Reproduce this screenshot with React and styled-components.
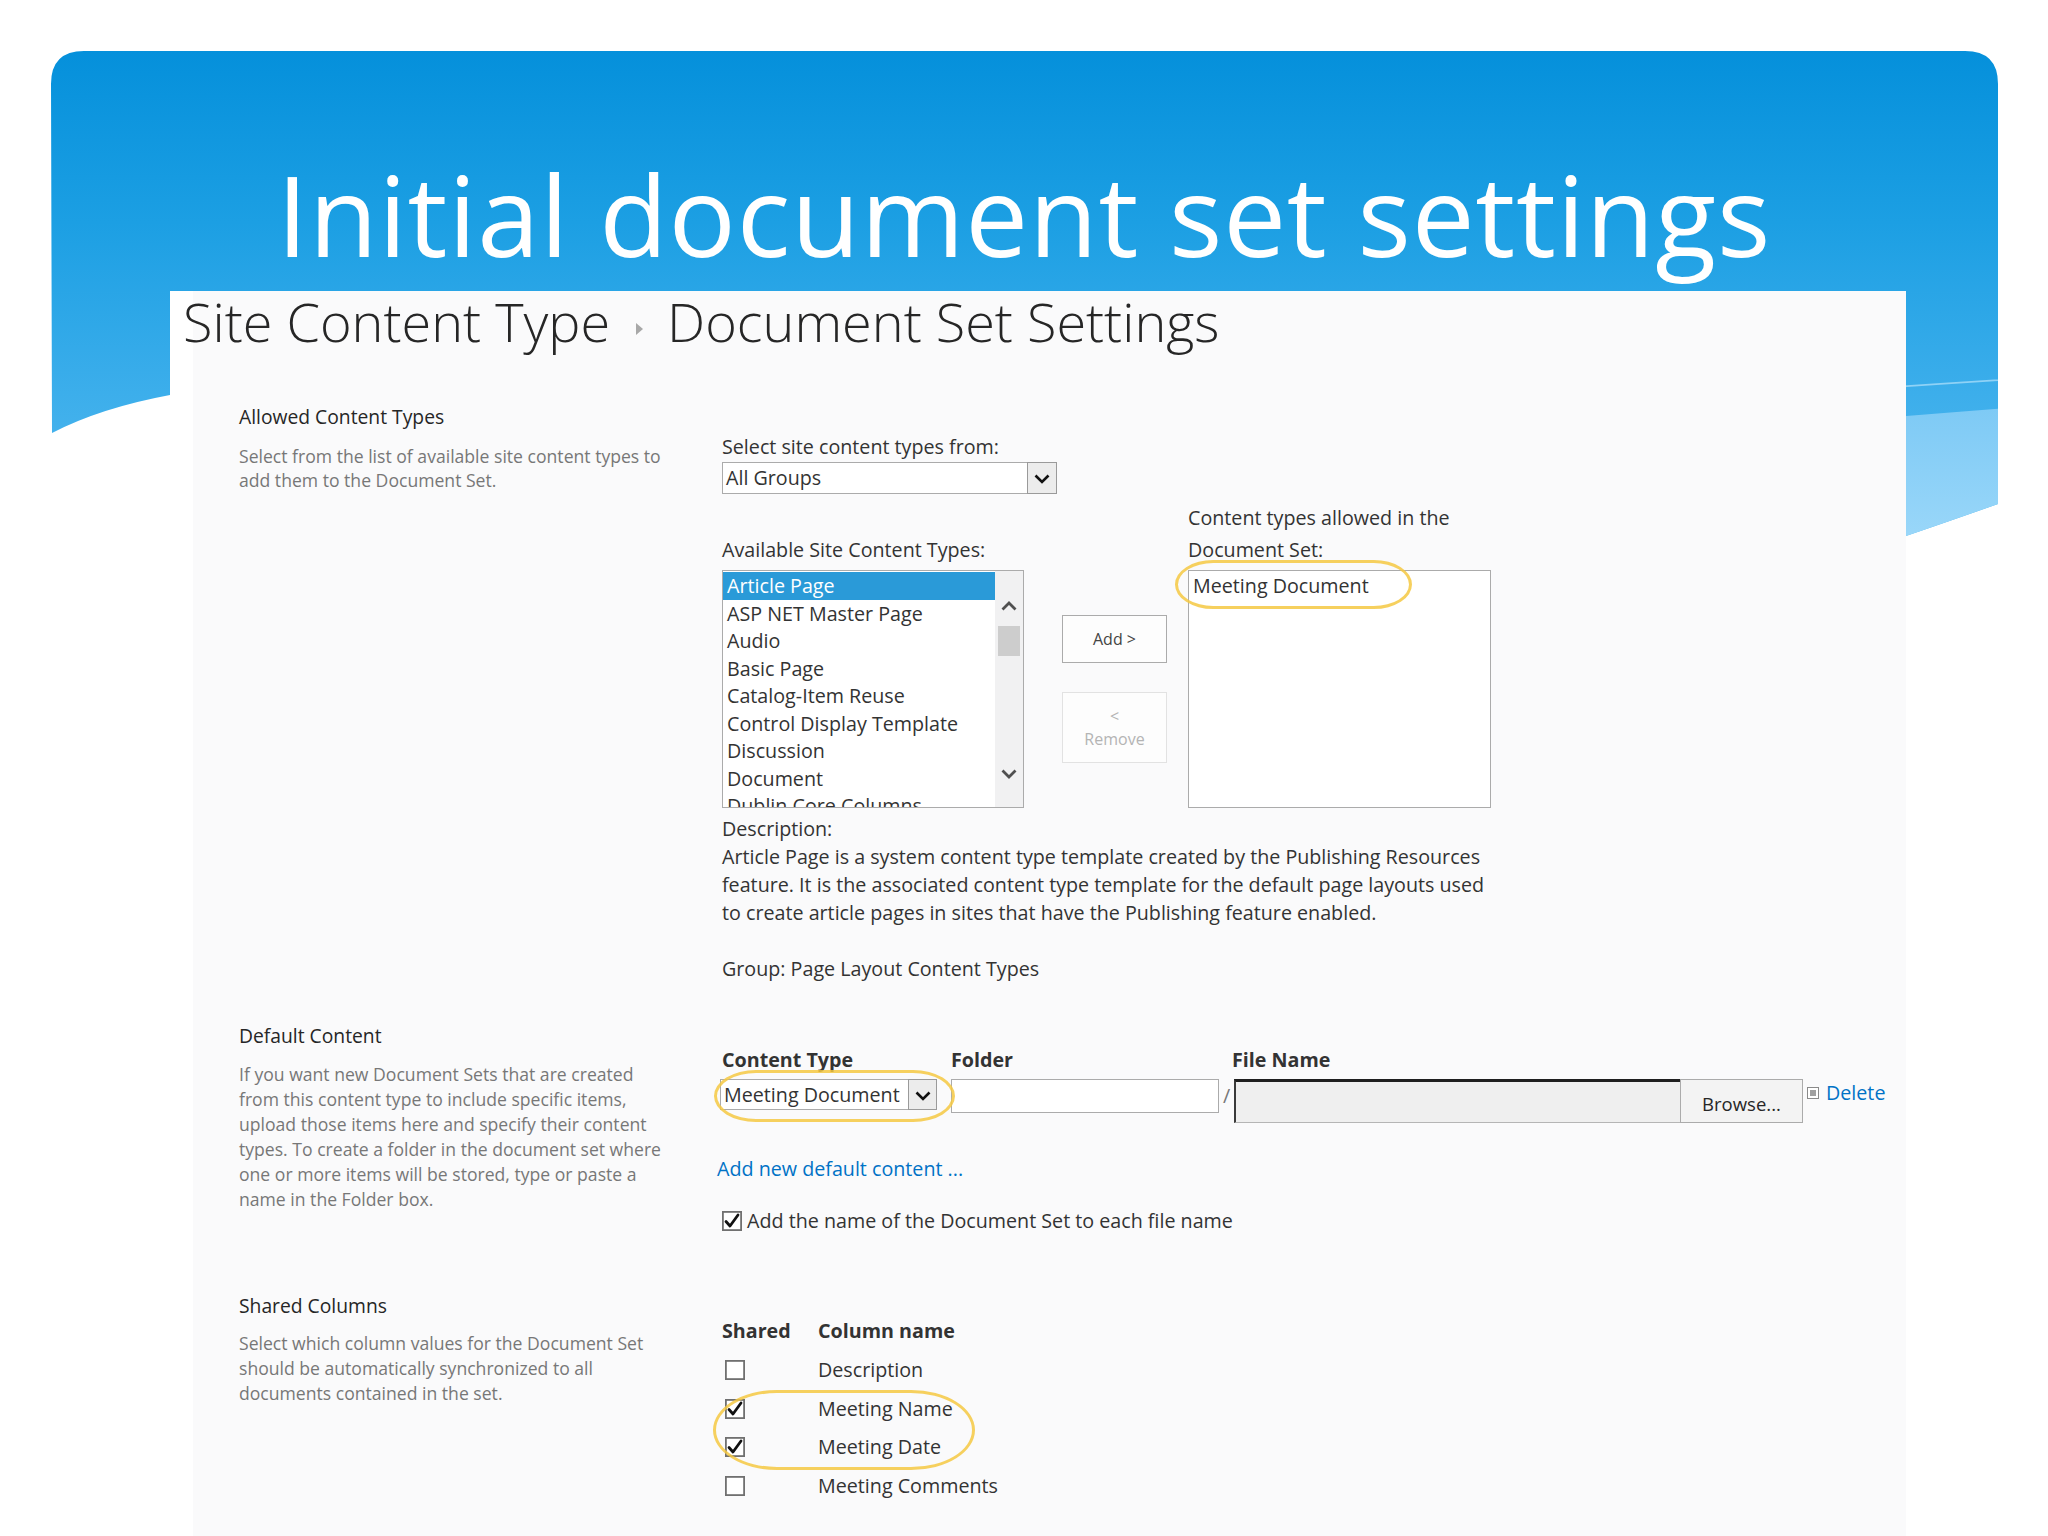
import React from 'react';
import styled, { createGlobalStyle } from 'styled-components';

const Global = createGlobalStyle`
  html, body { margin: 0; padding: 0; background: #ffffff; }
  body { font-family: "Open Sans", "Noto Sans", sans-serif; }
  * { box-sizing: border-box; }
`;

const FONT = `"Open Sans", "Noto Sans", sans-serif`;
const FS = 19.7;

const Slide = styled.div`
  position: relative;
  width: 2048px;
  height: 1536px;
  overflow: hidden;
  background: #ffffff;
`;

const Backdrop = styled.svg`
  position: absolute;
  left: 0;
  top: 0;
  width: 2048px;
  height: 1536px;
  z-index: 0;
`;

const Content = styled.div`
  position: relative;
  z-index: 1;
  padding-top: 138px;
`;

const Title = styled.h1`
  margin: 0;
  height: 152px;
  font: 400 112px/152px ${FONT};
  letter-spacing: 0.8px;
  color: #ffffff;
  text-align: center;
  white-space: nowrap;
`;

const Panel = styled.div`
  width: 1736px;
  height: 1246px;
  margin-left: 170px;
  background: linear-gradient(to right, #ffffff 0 23px, #fafafb 23px);
  color: #333333;
  font-family: ${FONT};
`;

const Breadcrumb = styled.div`
  display: flex;
  align-items: center;
  height: 60px;
  margin-top: 1px;
  padding-left: 13px;
  font: 300 54px/60px ${FONT};
  color: #262626;
  white-space: nowrap;
`;

const CrumbArrow = styled.span`
  width: 0;
  height: 0;
  margin: 16px 24px 0 26px;
  border-top: 6px solid transparent;
  border-bottom: 6px solid transparent;
  border-left: 7px solid #a8a8a8;
`;

const Section = styled.section`
  display: grid;
  grid-template-columns: 483px 1fr;
  align-items: start;
  padding-left: 69px;
  margin-top: ${(p) => p.$top}px;
`;

const Info = styled.div`
  display: flex;
  flex-direction: column;
`;

const InfoTitle = styled.div`
  font: 400 19.3px/26px ${FONT};
  color: #262626;
  white-space: nowrap;
`;

const InfoText = styled.p`
  margin: ${(p) => p.$gap}px 0 0;
  font: 400 17.6px/${(p) => p.$lh}px ${FONT};
  color: #777777;
  white-space: nowrap;
`;

const Body = styled.div`
  display: flex;
  flex-direction: column;
  align-items: flex-start;
  padding-top: ${(p) => p.$pad}px;
  font: 400 ${FS}px/26px ${FONT};
  color: #333333;
`;

const Label = styled.div`
  font: 400 ${FS}px/${(p) => p.$lh || 26}px ${FONT};
  color: #333333;
  margin-top: ${(p) => p.$mt || 0}px;
  white-space: nowrap;
`;

const SelectBox = styled.div`
  position: relative;
  display: flex;
  align-items: stretch;
  width: ${(p) => p.$w}px;
  height: ${(p) => p.$h}px;
  margin-top: ${(p) => p.$mt || 0}px;
  margin-left: ${(p) => p.$ml || 0}px;
  border: 1px solid #ababab;
  background: #ffffff;
`;

const SelectValue = styled.div`
  flex: 1;
  padding-left: 3px;
  font: 400 ${FS}px/${(p) => p.$h - 2}px ${FONT};
  color: #333333;
  white-space: nowrap;
  overflow: hidden;
`;

const SelectButton = styled.div`
  width: ${(p) => p.$w}px;
  display: flex;
  align-items: center;
  justify-content: center;
  border: 1px solid #9a9a9a;
  margin: -1px -1px -1px 0;
  background: #ececec;
`;

const TransferGrid = styled.div`
  display: grid;
  grid-template-columns: 340px 126px 303px;
  grid-template-rows: auto 238px;
  row-gap: 4px;
  margin-top: 8px;
`;

const GridLabel = styled.div`
  align-self: end;
  font: 400 ${FS}px/32px ${FONT};
  color: #333333;
  white-space: nowrap;
`;

const ListBox = styled.div`
  position: relative;
  display: flex;
  width: ${(p) => p.$w}px;
  height: 238px;
  border: 1px solid #ababab;
  background: #ffffff;
  overflow: hidden;
`;

const Options = styled.div`
  flex: 1;
  padding-top: 1px;
  overflow: hidden;
`;

const Option = styled.div`
  height: 27.5px;
  padding-left: 4px;
  font: 400 ${FS}px/27px ${FONT};
  color: ${(p) => (p.$sel ? '#ffffff' : '#333333')};
  background: ${(p) => (p.$sel ? '#2a9ad8' : 'transparent')};
  white-space: nowrap;
`;

const Scrollbar = styled.div`
  width: 28px;
  display: flex;
  flex-direction: column;
  align-items: center;
  padding: 26px 0 24px;
  background: #f1f1f2;
`;

const ScrollThumb = styled.div`
  width: 22px;
  height: 30px;
  margin-top: 9px;
  background: #cdcdcd;
`;

const Spacer = styled.div`
  flex: 1;
`;

const ButtonCol = styled.div`
  display: flex;
  flex-direction: column;
`;

const ActionButton = styled.div`
  width: 105px;
  height: ${(p) => p.$h}px;
  margin-top: ${(p) => p.$mt}px;
  display: flex;
  flex-direction: column;
  align-items: center;
  justify-content: center;
  border: 1px solid ${(p) => (p.$disabled ? '#e2e2e2' : '#ababab')};
  background: #fdfdfd;
  color: ${(p) => (p.$disabled ? '#b4b4b4' : '#444444')};
  font: 400 16px/23px ${FONT};
`;

const Paragraph = styled.p`
  margin: ${(p) => p.$mt || 0}px 0 0;
  font: 400 ${FS}px/28px ${FONT};
  color: #333333;
  white-space: nowrap;
`;

const Highlight = styled.div`
  position: absolute;
  left: ${(p) => p.$x}px;
  top: ${(p) => p.$y}px;
  width: ${(p) => p.$w}px;
  height: ${(p) => p.$h}px;
  border: 3px solid rgba(245, 200, 66, 0.85);
  border-radius: ${(p) => Math.round(p.$h * 0.8)}px / ${(p) => Math.round(p.$h / 2)}px;
  pointer-events: none;
`;

const HeadRow = styled.div`
  display: flex;
  font: 700 ${FS}px/26px ${FONT};
  color: #333333;
  white-space: nowrap;
`;

const HeadCell = styled.div`
  width: ${(p) => (p.$w ? `${p.$w}px` : 'auto')};
`;

const InputRow = styled.div`
  display: flex;
  align-items: flex-start;
  margin-top: 6px;
`;

const TextInput = styled.div`
  width: ${(p) => p.$w}px;
  height: 34px;
  margin-left: ${(p) => p.$ml || 0}px;
  border: 1px solid #ababab;
  background: #ffffff;
`;

const Slash = styled.div`
  width: 15px;
  text-align: center;
  font: 400 ${FS}px/34px ${FONT};
  color: #777777;
`;

const FileField = styled.div`
  width: 446px;
  height: 44px;
  border-top: 3px solid #1f1f1f;
  border-left: 2px solid #3a3a3a;
  border-bottom: 1px solid #b5b5b5;
  background: #efefef;
`;

const BrowseButton = styled.div`
  width: 123px;
  height: 44px;
  padding-top: 9px;
  border: 1px solid #ababab;
  background: #f3f3f3;
  text-align: center;
  font: 400 18.5px/30px ${FONT};
  color: #262626;
`;

const DeleteLink = styled.div`
  display: flex;
  align-items: center;
  gap: 7px;
  margin: 1px 0 0 4px;
  font: 400 ${FS}px/26px ${FONT};
  color: #0072c6;
`;

const Link = styled.div`
  margin: ${(p) => p.$mt}px 0 0 -5px;
  font: 400 ${FS}px/26px ${FONT};
  color: #0072c6;
  white-space: nowrap;
`;

const CheckRow = styled.div`
  display: flex;
  align-items: center;
  gap: 5px;
  margin-top: ${(p) => p.$mt}px;
  font: 400 ${FS}px/26px ${FONT};
  color: #333333;
  white-space: nowrap;
`;

const Table = styled.div`
  position: relative;
  display: grid;
  grid-template-columns: 96px auto;
`;

const TableHead = styled.div`
  font: 700 ${FS}px/26px ${FONT};
  color: #333333;
  margin-bottom: 7px;
  white-space: nowrap;
`;

const TableCell = styled.div`
  height: 38.6px;
  display: flex;
  align-items: center;
  padding-left: ${(p) => p.$pl || 0}px;
  font: 400 ${FS}px/26px ${FONT};
  color: #333333;
  white-space: nowrap;
`;

const ShiftBox = styled.div`
  position: relative;
`;

function Chevron({ dir = 'down', size = 20, stroke = '#111', width = 2.6 }) {
  const d = dir === 'down' ? 'M3.5 7.5 L10 14 L16.5 7.5' : 'M3.5 12.5 L10 6 L16.5 12.5';
  return (
    <svg width={size} height={size} viewBox="0 0 20 20" aria-hidden="true">
      <path d={d} fill="none" stroke={stroke} strokeWidth={width} strokeLinecap="butt" strokeLinejoin="miter" />
    </svg>
  );
}

function CheckBox({ checked }) {
  return (
    <svg width="20" height="20" viewBox="0 0 20 20" aria-hidden="true">
      <rect x="0.9" y="0.9" width="18.2" height="18.2" fill="#ffffff" stroke="#707070" strokeWidth="1.8" />
      {checked && (
        <path d="M4 10.5 L8 15 L16 4" fill="none" stroke="#111111" strokeWidth="2.8" strokeLinecap="round" strokeLinejoin="round" />
      )}
    </svg>
  );
}

function SmallBox() {
  return (
    <svg width="12" height="12" viewBox="0 0 12 12" aria-hidden="true">
      <rect x="0.5" y="0.5" width="11" height="11" fill="#ffffff" stroke="#8a8a8a" />
      <rect x="3" y="3" width="6" height="6" fill="#a0a0a0" />
    </svg>
  );
}

const availableTypes = [
  'Article Page',
  'ASP NET Master Page',
  'Audio',
  'Basic Page',
  'Catalog-Item Reuse',
  'Control Display Template',
  'Discussion',
  'Document',
  'Dublin Core Columns',
];

const sharedColumns = [
  { name: 'Description', checked: false },
  { name: 'Meeting Name', checked: true },
  { name: 'Meeting Date', checked: true },
  { name: 'Meeting Comments', checked: false },
];

function BlueBackdrop() {
  const shape =
    'M51 84 Q51 51 84 51 L1965 51 Q1998 51 1998 84 L1998 504 Q1950 521 1906 536 L1200 560 L170 395 Q100 408 52 433 Z';
  return (
    <Backdrop viewBox="0 0 2048 1536" aria-hidden="true">
      <defs>
        <linearGradient id="sky" x1="0" y1="51" x2="0" y2="540" gradientUnits="userSpaceOnUse">
          <stop offset="0" stopColor="#0590db" />
          <stop offset="0.35" stopColor="#1c9fe3" />
          <stop offset="0.7" stopColor="#3caeeb" />
          <stop offset="1" stopColor="#57baf0" />
        </linearGradient>
        <linearGradient id="band" x1="0" y1="400" x2="0" y2="540" gradientUnits="userSpaceOnUse">
          <stop offset="0" stopColor="#7cc9f5" />
          <stop offset="1" stopColor="#9ad7f9" />
        </linearGradient>
        <clipPath id="skyClip">
          <path d={shape} />
        </clipPath>
      </defs>
      <path d={shape} fill="url(#sky)" />
      <g clipPath="url(#skyClip)">
        <path d="M2048 405 Q1200 470 0 600 L0 700 L2048 700 Z" fill="url(#band)" />
        <path d="M2048 377 Q1200 430 0 560" fill="none" stroke="#8fd2f6" strokeWidth="1.6" />
      </g>
    </Backdrop>
  );
}

export default function App() {
  return (
    <>
      <Global />
      <Slide>
        <BlueBackdrop />
        <Content>
          <Title>Initial document set settings</Title>
          <Panel>
            <Breadcrumb>
              <span>Site Content Type</span>
              <CrumbArrow />
              <span>Document Set Settings</span>
            </Breadcrumb>

            <Section $top={53}>
              <Info>
                <InfoTitle>Allowed Content Types</InfoTitle>
                <InfoText $gap={14} $lh={24}>
                  Select from the list of available site content types to
                  <br />
                  add them to the Document Set.
                </InfoText>
              </Info>
              <Body $pad={30}>
                <Label>Select site content types from:</Label>
                <SelectBox $w={335} $h={32} $mt={2}>
                  <SelectValue $h={32}>All Groups</SelectValue>
                  <SelectButton $w={30}>
                    <Chevron dir="down" size={20} />
                  </SelectButton>
                </SelectBox>

                <TransferGrid>
                  <GridLabel>Available Site Content Types:</GridLabel>
                  <div />
                  <GridLabel>
                    Content types allowed in the
                    <br />
                    Document Set:
                  </GridLabel>

                  <ListBox $w={302}>
                    <Options>
                      {availableTypes.map((t, i) => (
                        <Option key={t} $sel={i === 0}>
                          {t}
                        </Option>
                      ))}
                    </Options>
                    <Scrollbar>
                      <Chevron dir="up" size={20} stroke="#505050" width={2.8} />
                      <ScrollThumb />
                      <Spacer />
                      <Chevron dir="down" size={20} stroke="#505050" width={2.8} />
                    </Scrollbar>
                  </ListBox>

                  <ButtonCol>
                    <ActionButton $h={48} $mt={45}>Add &gt;</ActionButton>
                    <ActionButton $h={71} $mt={29} $disabled>
                      <span>&lt;</span>
                      <span>Remove</span>
                    </ActionButton>
                  </ButtonCol>

                  <ShiftBox>
                    <ListBox $w={303}>
                      <Options>
                        <Option>Meeting Document</Option>
                      </Options>
                    </ListBox>
                    <Highlight $x={-13} $y={-10} $w={237} $h={49} />
                  </ShiftBox>
                </TransferGrid>

                <Label $lh={28} $mt={7}>Description:</Label>
                <Paragraph>
                  Article Page is a system content type template created by the Publishing Resources
                  <br />
                  feature. It is the associated content type template for the default page layouts used
                  <br />
                  to create article pages in sites that have the Publishing feature enabled.
                </Paragraph>
                <Paragraph $mt={28}>Group: Page Layout Content Types</Paragraph>
              </Body>
            </Section>

            <Section $top={40}>
              <Info>
                <InfoTitle>Default Content</InfoTitle>
                <InfoText $gap={13} $lh={25}>
                  If you want new Document Sets that are created
                  <br />
                  from this content type to include specific items,
                  <br />
                  upload those items here and specify their content
                  <br />
                  types. To create a folder in the document set where
                  <br />
                  one or more items will be stored, type or paste a
                  <br />
                  name in the Folder box.
                </InfoText>
              </Info>
              <Body $pad={24}>
                <HeadRow>
                  <HeadCell $w={229}>Content Type</HeadCell>
                  <HeadCell $w={281}>Folder</HeadCell>
                  <HeadCell>File Name</HeadCell>
                </HeadRow>
                <InputRow>
                  <ShiftBox>
                    <SelectBox $w={217} $h={31} $ml={-2}>
                      <SelectValue $h={31}>Meeting Document</SelectValue>
                      <SelectButton $w={29}>
                        <Chevron dir="down" size={20} />
                      </SelectButton>
                    </SelectBox>
                    <Highlight $x={-8} $y={-9} $w={241} $h={52} />
                  </ShiftBox>
                  <TextInput $w={268} $ml={14} />
                  <Slash>/</Slash>
                  <FileField />
                  <BrowseButton>Browse...</BrowseButton>
                  <DeleteLink>
                    <SmallBox />
                    <span>Delete</span>
                  </DeleteLink>
                </InputRow>
                <Link $mt={33}>Add new default content ...</Link>
                <CheckRow $mt={26}>
                  <CheckBox checked />
                  <span>Add the name of the Document Set to each file name</span>
                </CheckRow>
              </Body>
            </Section>

            <Section $top={59}>
              <Info>
                <InfoTitle>Shared Columns</InfoTitle>
                <InfoText $gap={12} $lh={25}>
                  Select which column values for the Document Set
                  <br />
                  should be automatically synchronized to all
                  <br />
                  documents contained in the set.
                </InfoText>
              </Info>
              <Body $pad={25}>
                <Table>
                  <TableHead>Shared</TableHead>
                  <TableHead>Column name</TableHead>
                  {sharedColumns.map((c) => (
                    <React.Fragment key={c.name}>
                      <TableCell $pl={3}>
                        <CheckBox checked={c.checked} />
                      </TableCell>
                      <TableCell>{c.name}</TableCell>
                    </React.Fragment>
                  ))}
                  <Highlight $x={-9} $y={72} $w={262} $h={80} />
                </Table>
              </Body>
            </Section>
          </Panel>
        </Content>
      </Slide>
    </>
  );
}
